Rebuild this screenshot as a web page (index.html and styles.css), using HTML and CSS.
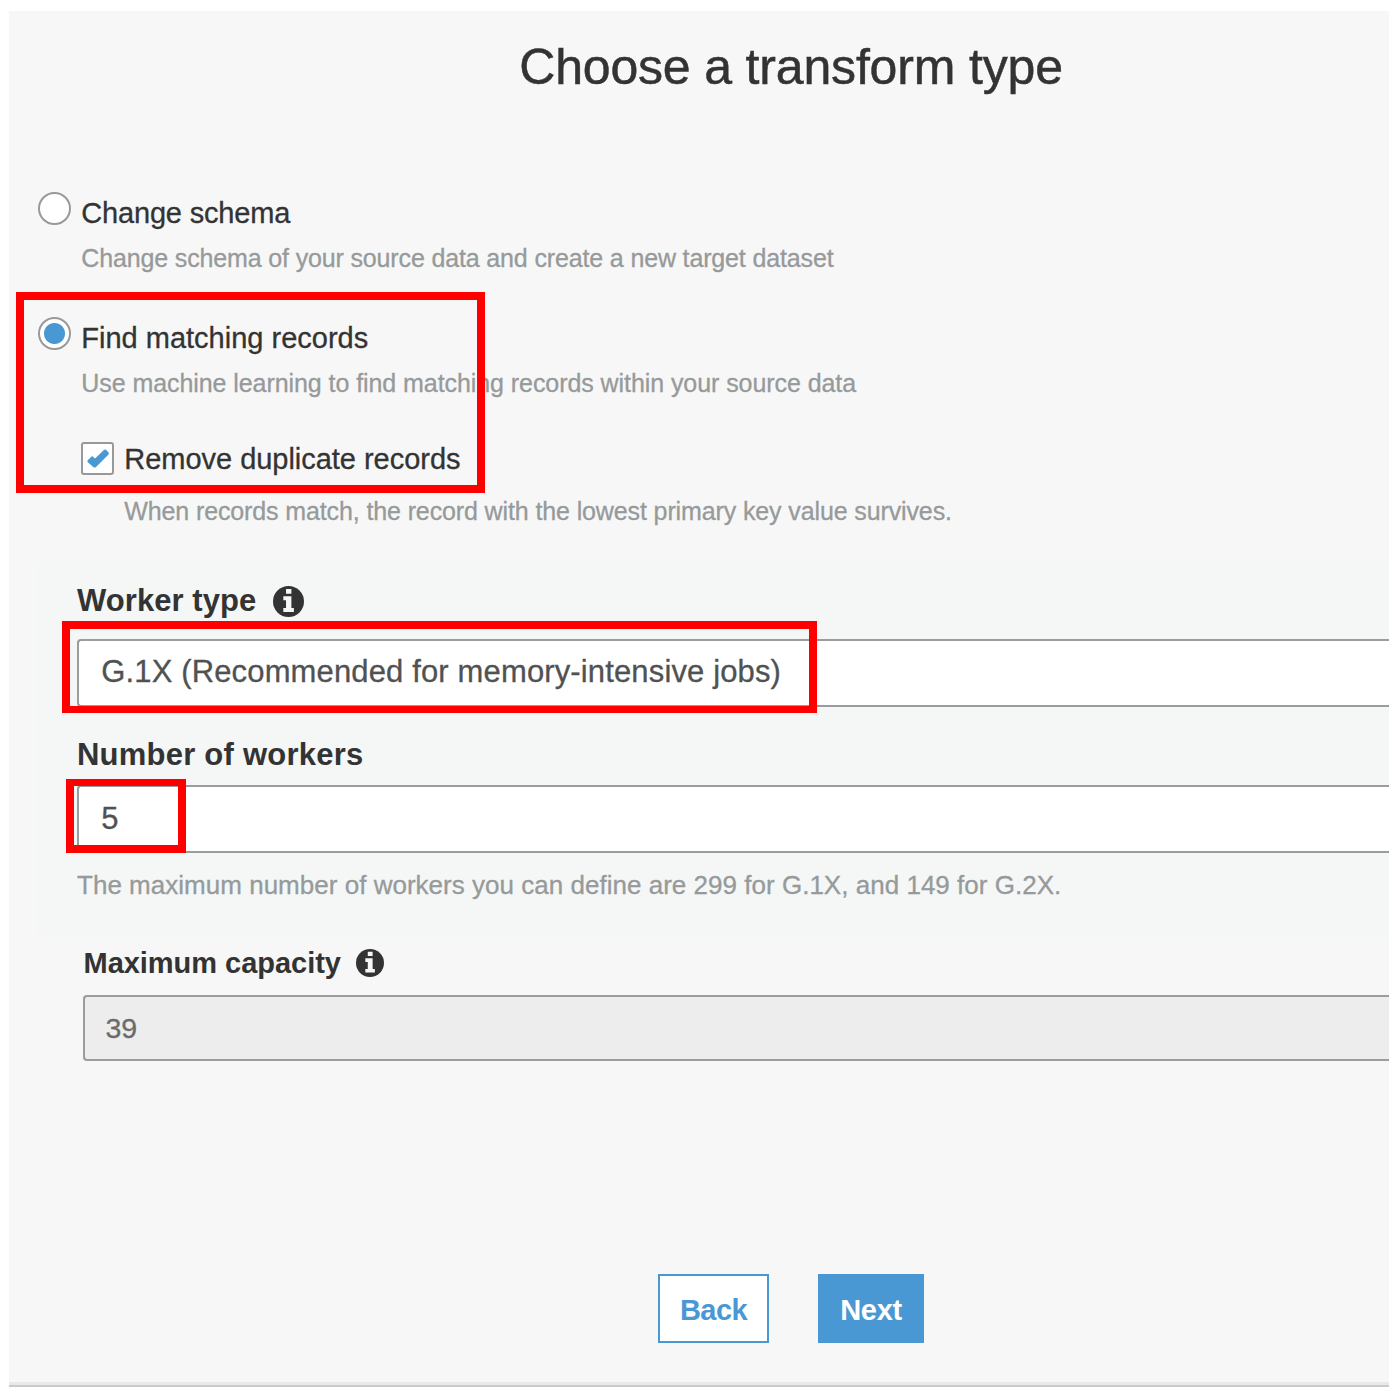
FILE: index.html
```
<!DOCTYPE html>
<html lang="en">
<head>
<meta charset="utf-8">
<title>Choose a transform type</title>
<link rel="stylesheet" href="styles.css">
</head>
<body>
<main class="panel">
  <h1 class="title">Choose a transform type</h1>

  <section class="options">
    <div class="option">
      <label class="option-head"><span class="radio"></span><span class="label label-schema">Change schema</span></label>
      <p class="hint hint-schema">Change schema of your source data and create a new target dataset</p>
    </div>
    <div class="option">
      <label class="option-head"><span class="radio checked"></span><span class="label label-find">Find matching records</span></label>
      <p class="hint hint-find">Use machine learning to find matching records within your source data</p>
      <div class="suboption">
        <label class="option-head">
          <span class="checkbox"><svg viewBox="0 0 24 20" width="24" height="20"><path d="M2 11 L6.2 6.9 L9 9.6 L18.2 0.8 Q19.2 0 20.2 0.9 L22.6 3.4 Q23.4 4.4 22.5 5.4 L10 18 Q8.6 19.2 7.2 18 L1.6 13 Q0.9 12 2 11 Z" fill="#4a98d3"/></svg></span>
          <span class="label label-remove">Remove duplicate records</span>
        </label>
        <p class="hint hint-remove">When records match, the record with the lowest primary key value survives.</p>
      </div>
    </div>
  </section>

  <section class="workers">
    <div class="field-label"><span class="label-worker">Worker type</span>
      <svg class="info" viewBox="0 0 30 30"><circle cx="15" cy="15" r="15" fill="#333"/><path d="M12.6 3h5.2v4.6h-5.2zM10 10h7.8v11.4h2.4v3.8H10v-3.8h2.6v-7.6H10z" fill="#f4f7f6"/></svg>
    </div>
    <div class="input input-type">G.1X (Recommended for memory-intensive jobs)</div>
    <div class="field-label second"><span class="label-number">Number of workers</span></div>
    <div class="input input-count">5</div>
    <p class="hint hint-max">The maximum number of workers you can define are 299 for G.1X, and 149 for G.2X.</p>
  </section>

  <section class="capacity">
    <div class="field-label"><span>Maximum capacity</span>
      <svg class="info" viewBox="0 0 30 30"><circle cx="15" cy="15" r="15" fill="#333"/><path d="M12.6 3h5.2v4.6h-5.2zM10 10h7.8v11.4h2.4v3.8H10v-3.8h2.6v-7.6H10z" fill="#f7f7f7"/></svg>
    </div>
    <div class="input disabled">39</div>
  </section>

  <div class="actions">
    <button class="btn back">Back</button>
    <button class="btn next">Next</button>
  </div>
</main>
<div class="mark mark-find"></div>
<div class="mark mark-type"></div>
<div class="mark mark-count"></div>
</body>
</html>
```
FILE: styles.css
```
* { box-sizing: border-box; }
body {
  margin: 0;
  position: relative;
  height: 1394px;
  background: #fff;
  color: #333;
  font-family: "Liberation Sans", Arial, sans-serif;
  overflow: hidden;
}
.panel {
  display: flex;
  flex-direction: column;
  width: 1380px;
  height: 1376px;
  margin: 11px 9px 0;
  background: #f7f7f7;
  border-bottom: 2px solid #cacaca;
  box-shadow: inset 0 -3px 0 #e9e9e9;
}
p, h1 { margin: 0; }
.title {
  margin-top: 26px;
  margin-left: 510.2px;
  font-size: 50px;
  font-weight: 400;
  line-height: 60px;
  letter-spacing: -0.17px;
  white-space: nowrap;
  -webkit-text-stroke: 0.5px #333;
}
.options { margin: 95px 0 0 29px; height: 369px; }
.option { height: 125px; }
.option-head { display: flex; gap: 10.3px; height: 51px; }
.radio {
  flex: none;
  width: 33px;
  height: 33px;
  border: 2px solid #999;
  border-radius: 50%;
  background: #fff;
}
.radio.checked { background: radial-gradient(circle, #4a98d3 10px, #fff 11px); }
.label {
  padding-top: 4px;
  font-size: 29px;
  line-height: 34px;
  white-space: nowrap;
  -webkit-text-stroke: 0.3px #333;
}
.label-schema { letter-spacing: -0.18px; }
.label-remove { letter-spacing: -0.03px; }
.hint {
  margin-left: 43.3px;
  font-size: 25px;
  line-height: 30px;
  color: #969a9a;
  white-space: nowrap;
  -webkit-text-stroke: 0.3px #969a9a;
}
.hint-schema { letter-spacing: -0.145px; }
.hint-find { letter-spacing: -0.07px; }
.hint-remove { letter-spacing: -0.12px; }
.suboption { margin: 44px 0 0 43px; }
.suboption .label { padding-top: 0; }
.suboption .option-head { height: 54px; }
.checkbox {
  flex: none;
  display: flex;
  align-items: center;
  justify-content: center;
  width: 33px;
  height: 33px;
  border: 2px solid #999;
  border-radius: 3px;
  background: #fff;
}
.workers {
  margin-left: 29px;
  height: 376px;
  padding: 22px 0 0 39px;
  background: #f4f7f6;
}
.field-label {
  display: flex;
  align-items: center;
  gap: 17px;
  height: 36px;
  font-size: 31px;
  line-height: 36px;
  font-weight: 700;
}
.label-worker { letter-spacing: 0.06px; }
.label-number { letter-spacing: 0.23px; }
.info { width: 31px; height: 31px; }
.input {
  display: flex;
  align-items: center;
  height: 68px;
  padding-left: 22.3px;
  border: 2px solid #999d9d;
  border-right: 0;
  border-radius: 4px 0 0 4px;
  background: #fff;
  color: #505252;
  font-size: 31px;
  -webkit-text-stroke: 0.3px currentColor;
}
.input-type { margin-top: 20px; padding-bottom: 2px; letter-spacing: 0.14px; }
.second { margin-top: 30px; }
.input-count { margin-top: 12px; }
.hint-max { margin: 17px 0 0; font-size: 26px; letter-spacing: 0.02px; }
.capacity { padding: 8px 0 0 74px; }
.capacity .field-label { padding-left: 0.5px; font-size: 29px; gap: 15px; letter-spacing: -0.03px; }
.capacity .info { width: 28px; height: 28px; }
.disabled { margin-top: 14px; height: 66px; padding-left: 20.5px; background: #ededed; color: #6b6b6b; font-size: 28.5px; }
.actions { display: flex; gap: 49px; margin: 213px 0 0 649px; }
.btn {
  height: 69px;
  padding: 4px 0 0;
  border: 2px solid #4a98d3;
  font: 700 29px "Liberation Sans", Arial, sans-serif;
}
.back { width: 111px; background: #fff; color: #4a98d3; letter-spacing: -0.6px; }
.next { width: 106px; background: #4a98d3; color: #fff; letter-spacing: -0.3px; }
.mark { position: absolute; border: 8px solid #f00; }
.mark-find { left: 16px; top: 292px; width: 469px; height: 201px; }
.mark-type { left: 62px; top: 621px; width: 755px; height: 92px; border-bottom-width: 7px; }
.mark-count { left: 66px; top: 779px; width: 120px; height: 74px; border-top-width: 7px; }
```
